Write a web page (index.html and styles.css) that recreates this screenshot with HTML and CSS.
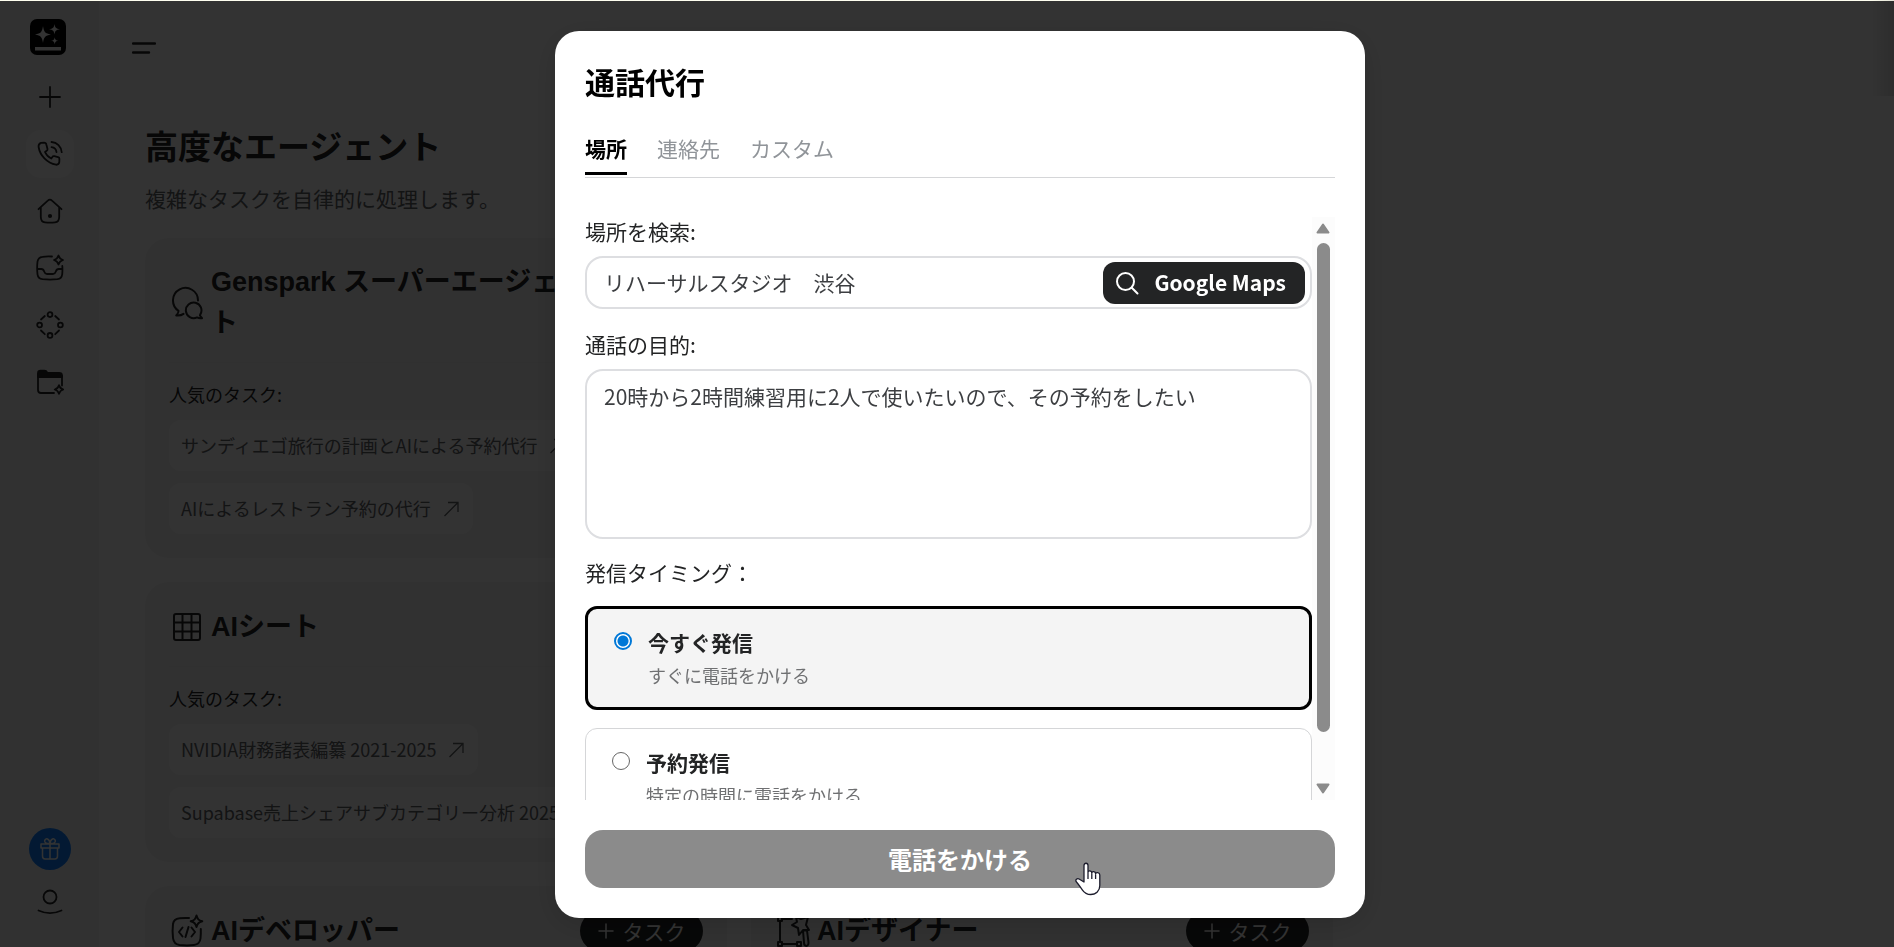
FILE: index.html
```html
<!DOCTYPE html>
<html lang="ja">
<head>
<meta charset="utf-8">
<title>通話代行</title>
<link rel="stylesheet" href="styles.css">
</head>
<body>
<svg class="sprite" aria-hidden="true">
  <symbol id="arrow" viewBox="0 0 18 18"><path d="M1.500 16 15 2.500M5 2.500h10V12" fill="none" stroke="currentColor" stroke-width="1.300"/></symbol>
</svg>
<div class="app">
  <nav class="sidebar" aria-label="メイン">
    <a class="logo" href="#" aria-label="ホーム">
      <svg viewBox="0 0 36 36"><rect width="36" height="36" rx="7" fill="#000"/><path d="M13 7c1 6 2 7.500 8 8.500-6 1-7 2.500-8 8.500-1-6-2-7.500-8-8.500 6-1 7-2.500 8-8.500zM24.500 5c.6 3.800 1.500 4.700 5.500 5.300-4 .6-4.900 1.500-5.500 5.300-.6-3.800-1.500-4.700-5.500-5.300 4-.6 4.900-1.500 5.500-5.300zM24.700 18.200c.4 2.600 1 3.200 3.700 3.600-2.700.4-3.300 1-3.700 3.600-.4-2.600-1-3.200-3.700-3.600 2.700-.4 3.300-1 3.700-3.600zM5 28h26v3.500H5z" fill="#fff"/></svg>
    </a>
    <a class="nav-item" href="#" aria-label="新規"><svg viewBox="0 0 28 28"><path d="M14 4v20M4 14h20"/></svg></a>
    <a class="nav-item nav-item-active" href="#" aria-label="通話"><svg viewBox="0 0 28 28"><path d="M5 2.800C3.200 3.500 2.300 5 2.600 7 4 15.500 11 23 20 24.700c2 .2 3-.8 3.300-2.500l.1-3.400c0-.8-.5-1.400-1.300-1.600l-3.800-1c-.9-.2-1.500 0-2 .8l-1 1.500c-3-1.400-5-3.500-6.300-6.500l1.700-1.200c.7-.5 1-1 .8-1.800L10.400 4.700C10.200 3.500 9.200 2.600 8 2.600zM15.500 2c5.500.3 9.800 4.500 10.200 10.200M15.500 7.200c2.900.3 4.700 2.200 5 5"/></svg></a>
    <a class="nav-item" href="#" aria-label="ホーム"><svg viewBox="0 0 28 28"><path d="M2.500 12.200 11.800 3.700a3 3 0 0 1 4.200 0l9.500 8.500M4.800 10.500v9.300c0 4 1.200 5.400 4.200 5.600 3.300.3 6.700.3 10 0 3-.2 4.200-1.600 4.200-5.600v-9.300"/><circle cx="14" cy="19" r="1.200" fill="currentColor"/></svg></a>
    <a class="nav-item" href="#" aria-label="受信トレイ"><svg viewBox="0 0 28 28"><path d="M16 2.500c-4-.2-7-.1-9.500.3-3 .4-4.600 1.900-5 4.900-.5 4.300-.5 8.300 0 12.600.4 3 2 4.500 5 4.900 5 .5 10 .5 15 0 3-.4 4.300-1.900 4.700-4.900.3-3 .3-5.800.1-8.300M1.300 15h4c2.300 0 2.500 1.300 3 2.800.5 1.600 1.200 2.200 2.700 2.200h6c1.500 0 2.200-.6 2.700-2.200.5-1.500.7-2.800 3-2.800h3.500M22.500 1.500c.8 2.700 1.500 3.600 4.500 4.500-3 .9-3.700 1.800-4.500 4.500-.8-2.700-1.500-3.600-4.500-4.500 3-.9 3.700-1.800 4.500-4.500z"/></svg></a>
    <a class="nav-item" href="#" aria-label="ワークフロー"><svg viewBox="0 0 28 28"><circle cx="14" cy="3.600" r="2.400"/><circle cx="14" cy="24.400" r="2.400"/><circle cx="3.600" cy="14" r="2.400"/><circle cx="24.400" cy="14" r="2.400"/><path d="M5 8.500 8.800 5M19.200 5 23 8.500M5 19.500 8.800 23.200M23 19.500l-3.800 3.700"/></svg></a>
    <a class="nav-item" href="#" aria-label="ドライブ"><svg viewBox="0 0 28 28"><path d="M18 25H5c-2 0-3-1-3-3V6M26 17.500V8"/><path fill="currentColor" d="M2 9V5c0-1.500.8-2.400 2.500-2.400h4c1.500 0 2 .4 2.600 1.800l.2.600H23c2 0 3 .8 3 2.500V9z"/><path d="M23 17.200c.8 2.700 1.500 3.600 4.300 4.300-2.800.8-3.500 1.600-4.300 4.300-.8-2.700-1.500-3.500-4.300-4.300 2.800-.7 3.500-1.600 4.300-4.300z"/></svg></a>
    <div class="sidebar-foot">
      <button class="gift" type="button" aria-label="ギフト"><svg viewBox="0 0 24 24"><path d="M3 7h18v4H3zM4.500 11v8c0 2 .8 3 2.700 3h9.600c1.900 0 2.700-1 2.700-3v-8M12 7v15M12 6.500C8 7 6.300 5.500 6.700 3.500 7.500.7 11.500 1.300 12 6.500 12.500 1.300 16.500.7 17.300 3.500 17.700 5.500 16 7 12 6.500z"/></svg></button>
      <a class="user" href="#" aria-label="アカウント"><svg viewBox="0 0 28 28"><circle cx="14" cy="8" r="6.500"/><path d="M2.500 21.500c7.500 3.400 15.500 3.400 23 0"/></svg></a>
    </div>
  </nav>

  <main class="main">
    <button class="menu" type="button" aria-label="メニュー"><svg viewBox="0 0 24 14"><path d="M1 2.500h22M1 11.500h16" fill="none" stroke="currentColor" stroke-width="2.400" stroke-linecap="round"/></svg></button>
    <h1 class="heading">高度なエージェント</h1>
    <p class="lead">複雑なタスクを自律的に処理します。</p>
    <div class="cards">
      <section class="card">
        <header class="card-head">
          <svg class="card-icon" viewBox="0 0 36 36"><path d="M29 15.500A12.500 12.500 0 1 0 9.500 25.800c.2 1.700-.5 2.700-2.200 4.700 3 .2 5.500-.3 7.200-1.600M31 30.500c1 1.500 1.500 2 2 2.700-1.800.3-3.500 0-5-.8a7.800 7.800 0 1 1 3.200-2.800"/></svg>
          <h2 class="card-title">Genspark スーパーエージェント</h2>
        </header>
        <p class="card-label">人気のタスク:</p>
        <div class="chips">
          <a class="chip" href="#">サンディエゴ旅行の計画とAIによる予約代行<svg><use href="#arrow"/></svg></a>
          <a class="chip" href="#">AIによるレストラン予約の代行<svg><use href="#arrow"/></svg></a>
        </div>
      </section>
      <section class="card">
        <header class="card-head">
          <svg class="card-icon" viewBox="0 0 36 36"><rect x="5" y="5" width="26" height="26" rx="2"/><path d="M13.500 5v26M22.500 5v26M5 13.500h26M5 22.500h26"/></svg>
          <h2 class="card-title">AIシート</h2>
        </header>
        <p class="card-label">人気のタスク:</p>
        <div class="chips">
          <a class="chip" href="#">NVIDIA財務諸表編纂 2021-2025<svg><use href="#arrow"/></svg></a>
          <a class="chip" href="#">Supabase売上シェアサブカテゴリー分析 2025<svg><use href="#arrow"/></svg></a>
        </div>
      </section>
      <section class="card">
        <header class="card-head">
          <svg class="card-icon" viewBox="0 0 36 36"><path d="M20 5c-4-.2-7-.1-9.500.3C6.500 5.800 4.500 7.500 4 11c-.6 5-.6 9 0 14 .5 4 2.500 6.500 6.500 7 5 .5 10 .5 14.500 0 4-.5 6-2.500 6.500-6.500.4-4 .4-6.500.3-9.500M13.500 14.500 10 19l3.500 4.500M22.500 14.500 26 19l-3.500 4.500M19.500 14l-3 10M27.500 2.500c1 3.600 2 4.700 5.800 5.800-3.800 1-4.800 2.200-5.800 5.800-1-3.600-2-4.700-5.800-5.800 3.800-1.100 4.800-2.200 5.800-5.800z"/></svg>
          <h2 class="card-title">AIデベロッパー</h2>
          <button class="task" type="button"><svg viewBox="0 0 16 16"><path d="M8 1v14M1 8h14"/></svg>タスク</button>
        </header>
      </section>
      <section class="card card-second">
        <header class="card-head">
          <svg class="card-icon" viewBox="0 0 36 36"><rect x="3" y="4" width="4" height="4"/><rect x="3" y="29" width="4" height="4"/><rect x="22" y="29" width="4" height="4"/><path d="M5 8v21M7 31h15M7 6h10M21 4l5 2 7-2-2 8 3 5-6 0-4 5-1-7-6-3 5-3zM28 17.500l4 0 1.500 12c.3 4.500-4.500 4.500-4.500 0z"/></svg>
          <h2 class="card-title">AIデザイナー</h2>
          <button class="task" type="button"><svg viewBox="0 0 16 16"><path d="M8 1v14M1 8h14"/></svg>タスク</button>
        </header>
      </section>
    </div>
  </main>
  <div class="edge-shadow"></div>
</div>

<div class="overlay">
  <div class="modal" role="dialog" aria-modal="true" aria-labelledby="dialog-title">
    <h2 class="modal-title" id="dialog-title">通話代行</h2>
    <div class="tabs" role="tablist">
      <button class="tab tab-active" type="button" role="tab" aria-selected="true">場所</button>
      <button class="tab" type="button" role="tab" aria-selected="false">連絡先</button>
      <button class="tab" type="button" role="tab" aria-selected="false">カスタム</button>
    </div>
    <div class="modal-body">
      <form class="form" id="call-form">
        <label class="label" for="place">場所を検索:</label>
        <div class="search">
          <input class="search-input" id="place" type="text" value="リハーサルスタジオ　渋谷">
          <button class="maps" type="button"><svg viewBox="0 0 24 24"><circle cx="10.500" cy="10.500" r="8.500"/><path d="m16.800 16.800 5.700 5.700"/></svg><span class="maps-text">Google Maps</span></button>
        </div>
        <label class="label" for="purpose">通話の目的:</label>
        <textarea class="purpose" id="purpose">20時から2時間練習用に2人で使いたいので、その予約をしたい</textarea>
        <p class="label" id="timing">発信タイミング：</p>
        <div class="options" role="radiogroup" aria-labelledby="timing">
          <label class="option option-active"><input type="radio" name="timing" checked><span><span class="option-title">今すぐ発信</span><span class="option-note">すぐに電話をかける</span></span></label>
          <label class="option"><input type="radio" name="timing"><span><span class="option-title">予約発信</span><span class="option-note">特定の時間に電話をかける</span></span></label>
        </div>
      </form>
      <div class="scrollbar" aria-hidden="true">
        <svg viewBox="0 0 14 11"><path d="M7 1.500 12.500 9.500h-11z"/></svg>
        <div class="track"><div class="thumb"></div></div>
        <svg viewBox="0 0 14 11"><path d="M7 9.500 1.500 1.500h11z"/></svg>
      </div>
    </div>
    <button class="submit" type="submit" form="call-form">電話をかける
      <svg class="pointer" viewBox="0 0 26 34" aria-hidden="true"><path d="M9 18.500V3.500c0-3 4-3 4 0v7c0-2.200 3.800-2.200 3.800.5 0-2 3.800-2 3.800.8 0-1.800 4.200-1.600 4.200 1.200v10.500c0 5.500-3.800 9-9 9-4 0-6.500-1.800-8.500-4.700C5 24.500 3.500 22.300 1.500 20c-1.800-2.300.8-4.200 3-2.800L9 20zM13 10.500V17M16.800 11.500V17M20.600 12.500V17"/></svg>
    </button>
  </div>
</div>
</body>
</html>
```
FILE: styles.css
```css
* { box-sizing: border-box; }
html, body { height: 100%; margin: 0; }
body {
  font-family: "Noto Sans CJK JP", sans-serif;
  font-size: 21px;
  line-height: 32px;
  color: #232425;
  background: #fff;
  overflow: hidden;
}
h1, h2, p { margin: 0; }
a { color: inherit; text-decoration: none; }
button { font: inherit; color: inherit; border: 0; padding: 0; background: none; cursor: pointer; }
.sprite { display: none; }

.app { display: flex; height: 100%; overflow: hidden; border-top: 1px solid #fffff0; }

.sidebar {
  flex: none;
  width: 99px;
  display: flex;
  flex-direction: column;
  align-items: center;
  gap: 9px;
  padding: 18px 0 30px;
  background: #f5f5f5;
}
.logo { display: block; width: 36px; height: 36px; margin: 0 3px 9px 0; }
.logo svg { display: block; }
.nav-item { display: flex; align-items: center; justify-content: center; width: 48px; height: 48px; border-radius: 15px; }
.nav-item-active { background: #fff; }
.nav-item svg, .user svg { width: 28px; height: 28px; }
.nav-item svg, .user svg, .gift svg, .card-icon, .task svg, .maps svg {
  fill: none;
  stroke: currentColor;
  stroke-width: 1.8;
  stroke-linecap: round;
  stroke-linejoin: round;
}
.sidebar-foot { margin-top: auto; display: flex; flex-direction: column; align-items: center; gap: 19px; }
.gift { display: flex; align-items: center; justify-content: center; width: 42px; height: 42px; border-radius: 50%; background: #0f7fff; color: #fff; }
.gift svg { width: 24px; height: 24px; stroke-width: 1.5; }
.user { display: flex; }

.main { flex: 1; min-width: 0; padding: 40px 46px 0; }
.menu { display: block; width: 24px; height: 14px; margin-left: -13px; }
.menu svg { display: block; }
.heading { margin-top: 65px; font-size: 33px; line-height: 50px; }
.lead { margin: 12px 0 24px; color: #606366; }

.cards { display: grid; grid-template-columns: repeat(2, 1fr); gap: 24px; max-width: 1188px; }
.card { grid-column: 1; min-height: 240px; padding: 24px; border-radius: 24px; background: #f5f5f5; }
.card-second { grid-column: 2; grid-row: 3; }
.card-head { display: flex; align-items: center; gap: 6px; min-height: 61px; padding-bottom: 18px; border-bottom: 1px solid #f0f0f0; }
.card-icon { flex: none; width: 36px; height: 36px; stroke-width: 2; }
.card-title { flex: 1; max-width: 390px; font: bold 27px/41px "Liberation Sans", "Noto Sans CJK JP", sans-serif; }
.task { display: flex; align-items: center; justify-content: center; gap: 9px; width: 123px; height: 42px; margin-left: auto; border-radius: 21px; background: #232425; color: #fff; }
.task svg { width: 16px; height: 16px; stroke-width: 1.5; }
.card-label { margin: 18px 0 12px; font-size: 18px; line-height: 27px; color: #232425; }
.chips { display: flex; flex-direction: column; align-items: flex-start; gap: 12px; }
.chip { display: flex; align-items: center; gap: 12px; padding: 12px; border-radius: 12px; background: #fff; color: #606366; font-size: 18px; line-height: 27px; white-space: nowrap; }
.chip svg { width: 18px; height: 18px; }

.edge-shadow { position: absolute; top: 0; right: 0; width: 24px; height: 96px; background: linear-gradient(to right, transparent, rgba(0, 0, 0, .12)); }

.overlay {
  position: fixed;
  inset: 1px 0 0;
  display: flex;
  justify-content: center;
  padding: 30px 0 29px 26px;
  background: rgba(0, 0, 0, .8);
}
.modal {
  display: flex;
  flex-direction: column;
  width: 810px;
  padding: 30px;
  border-radius: 24px;
  background: #fff;
  box-shadow: 0 6px 30px rgba(0, 0, 0, .15);
}
.modal-title { font-size: 30px; line-height: 41px; color: #000; }
.tabs { display: flex; gap: 30px; margin: 30px 0 39px; padding-bottom: 2px; border-bottom: 1px solid #d5d6d8; }
.tab { padding-bottom: 8px; border-bottom: 3px solid transparent; color: #909499; }
.tab-active { border-color: #000; color: #000; font-weight: bold; }

.modal-body { flex: 1; min-height: 0; display: flex; overflow: hidden; }
.form { flex: 1; min-width: 0; }
.label { display: block; line-height: 28px; }
.search { display: flex; align-items: center; height: 53px; margin: 11px 0 21px; padding: 0 5px 0 17px; border: 2px solid #dddee1; border-radius: 18px; }
.search-input { flex: 1; min-width: 0; height: 42px; padding: 0 0 2px; border: 0; outline: 0; background: none; color: #3c3e41; font: inherit; }
.maps { display: flex; align-items: center; gap: 15px; height: 42px; padding: 0 19px 0 12px; border-radius: 12px; background: #232425; color: #fff; font-weight: bold; }
.maps svg { width: 24px; height: 24px; stroke-width: 2; }
.maps-text { padding-bottom: 2px; }
.purpose { display: block; width: 100%; height: 170px; margin: 11px 0 19px; padding: 9px 17px; border: 2px solid #dddee1; border-radius: 18px; outline: 0; resize: none; color: #3c3e41; font: inherit; }
.options { display: flex; flex-direction: column; gap: 18px; margin-top: 20px; }
.option { display: flex; align-items: flex-start; gap: 16px; padding: 17px 26px 18px; border: 1px solid #d5d6d8; border-radius: 12px; }
.option-active { border: 3px solid #000; background: #f4f4f4; }
.option input { flex: none; appearance: none; width: 18px; height: 18px; margin: 6px 0 0; border: 1px solid #666; border-radius: 50%; background: #fff; }
.option input:checked { border: 2px solid #0078d7; background: radial-gradient(circle, #0078d7 5px, #fff 6px); }
.option-title { display: block; font-weight: bold; }
.option-note { display: block; margin-top: 4px; font-size: 18px; line-height: 27px; color: #6f7072; }

.scrollbar { flex: none; width: 23px; display: flex; flex-direction: column; align-items: center; gap: 9px; padding: 6px 1px 6px 0; background: #fcfcfc; }
.scrollbar svg { width: 14px; height: 11px; fill: #8b8b8b; stroke: #8b8b8b; stroke-width: 2; stroke-linejoin: round; }
.track { flex: 1; width: 13px; }
.thumb { height: 92%; border-radius: 7px; background: #8b8b8b; }

.submit { position: relative; flex: none; height: 58px; margin-top: 30px; border-radius: 18px; background: #8b8b8b; color: #fff; font-size: 24px; font-weight: bold; }
.pointer { position: absolute; left: 490px; top: 32px; width: 26px; height: 34px; fill: #fff; stroke: #1c1c2c; stroke-width: 1.3; stroke-linejoin: round; }
```
